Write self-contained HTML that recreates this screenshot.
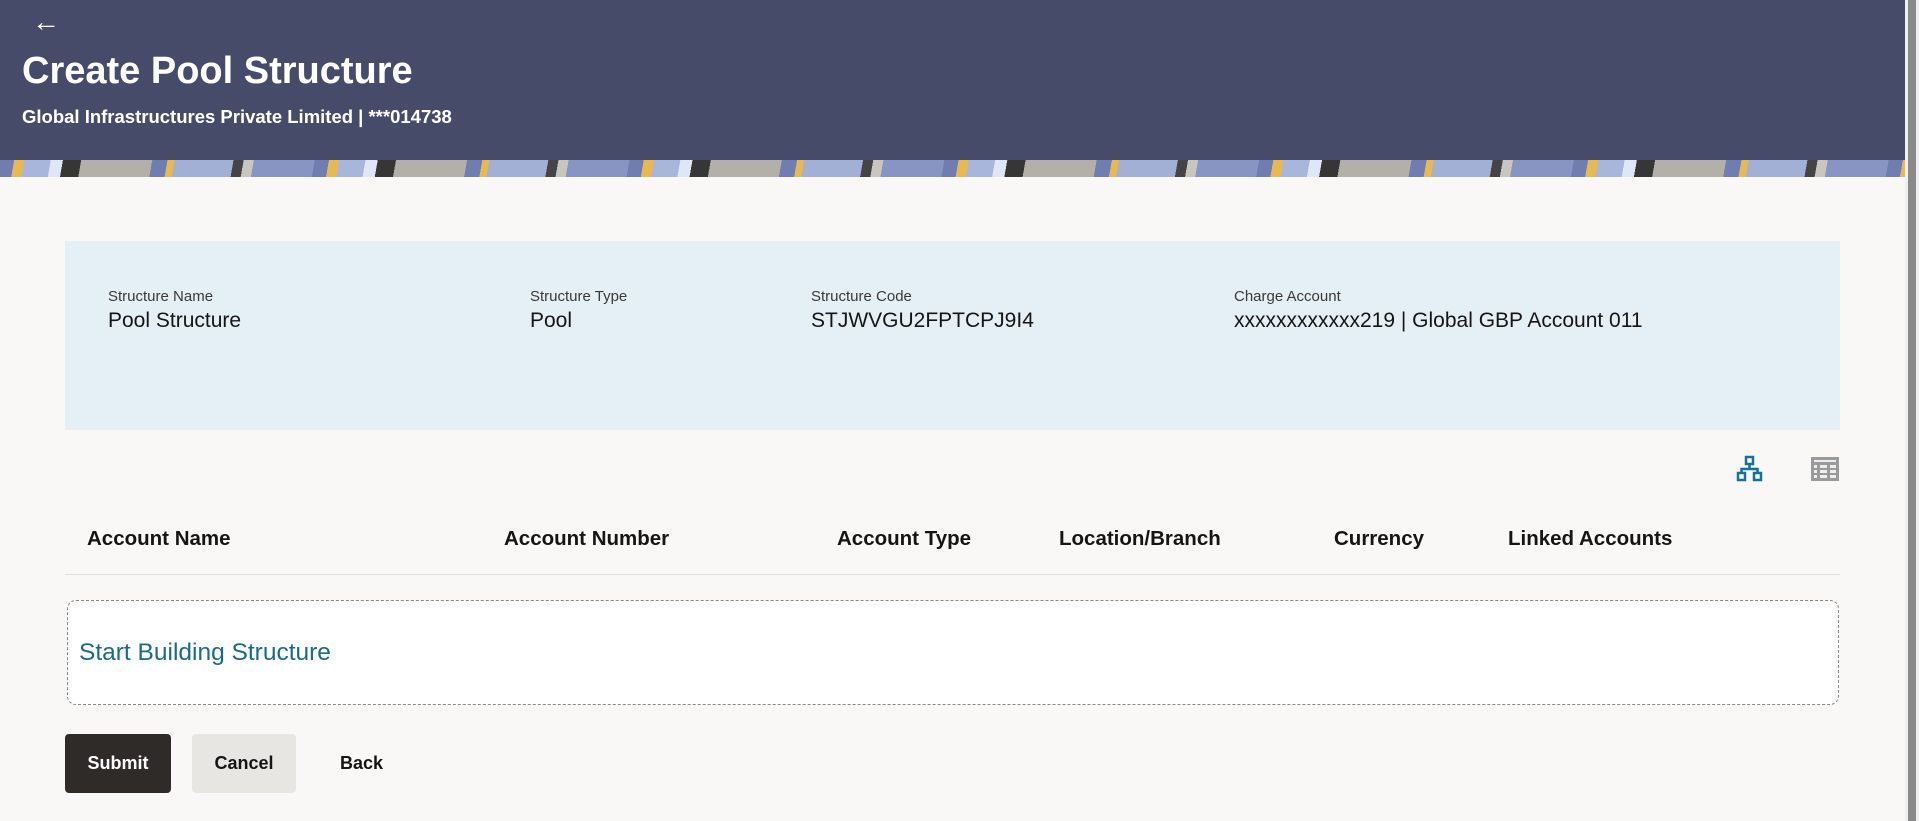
<!DOCTYPE html>
<html><head><style>
*{margin:0;padding:0;box-sizing:border-box}
body{width:1919px;height:821px;overflow:hidden;background:#f9f8f6;font-family:"Liberation Sans",sans-serif;position:relative;color:#161513}
.hdr{position:absolute;left:0;top:0;width:1905px;height:160px;background:#474b6a}
.band{position:absolute;left:0;top:160px;width:1905px;height:17px;
background:repeating-linear-gradient(100deg,#6f7db0 0 14px,#e8b952 14px 24px,#a9b6dc 24px 50px,#dfe6f5 50px 62px,#363634 62px 80px,#b3b0aa 80px 150px,#6f7db0 150px 165px,#e8b952 165px 172px,#a3b0d6 172px 230px,#444 230px 240px,#c8c6c0 240px 250px,#8795c4 250px 310px)}
.sb{position:absolute;left:1905px;top:0;width:14px;height:821px;background:#f0f0f0}
.sb i{position:absolute;left:3px;top:0;width:8px;height:821px;background:#8a8a8a}
.abs{position:absolute;white-space:nowrap}
.lbl{font-size:15px;color:#3b3936}
.val{font-size:21px}
.th{font-size:20.5px;font-weight:bold;top:527px}
</style></head><body>
<div class="hdr"></div><div class="band"></div>
<div class="sb"><i></i></div>
<div class="abs" style="left:32px;top:6px;color:#fff;font-size:28px">&#8592;</div>
<div class="abs" style="left:22px;top:50px;color:#fff;font-size:38px;font-weight:bold">Create Pool Structure</div>
<div class="abs" style="left:22px;top:106px;color:#fff;font-size:18.5px;font-weight:bold">Global Infrastructures Private Limited | ***014738</div>

<div class="abs" style="left:65px;top:241px;width:1775px;height:189px;background:#e4f0f6"></div>
<div class="abs lbl" style="left:108px;top:288px">Structure Name</div>
<div class="abs val" style="left:108px;top:309px">Pool Structure</div>
<div class="abs lbl" style="left:530px;top:288px">Structure Type</div>
<div class="abs val" style="left:530px;top:309px">Pool</div>
<div class="abs lbl" style="left:811px;top:288px">Structure Code</div>
<div class="abs val" style="left:811px;top:309px">STJWVGU2FPTCPJ9I4</div>
<div class="abs lbl" style="left:1234px;top:288px">Charge Account</div>
<div class="abs val" style="left:1234px;top:309px">xxxxxxxxxxxx219 | Global GBP Account 011</div>

<svg class="abs" style="left:1736px;top:455px" width="28" height="28" viewBox="0 0 28 28" fill="none" stroke="#16709e" stroke-width="2.5">
<rect x="10" y="2" width="7" height="7"/><rect x="2" y="18" width="7" height="7"/><rect x="18" y="18" width="7" height="7"/>
<path d="M13.5 9v5M5.5 18v-4h16v4"/></svg>
<svg class="abs" style="left:1811px;top:457px" width="28" height="24" viewBox="0 0 28 24">
<rect x="0" y="0" width="28" height="24" fill="#9a9a9a"/>
<rect x="3" y="3" width="22" height="2" fill="#eee"/>
<g fill="#eee"><rect x="3" y="8" width="3" height="3"/><rect x="9" y="8" width="7" height="3"/><rect x="19" y="8" width="6" height="3"/>
<rect x="3" y="13" width="3" height="3"/><rect x="9" y="13" width="7" height="3"/><rect x="19" y="13" width="6" height="3"/>
<rect x="3" y="18" width="3" height="3"/><rect x="9" y="18" width="7" height="3"/><rect x="19" y="18" width="6" height="3"/></g></svg>

<div class="abs th" style="left:87px">Account Name</div>
<div class="abs th" style="left:504px">Account Number</div>
<div class="abs th" style="left:837px">Account Type</div>
<div class="abs th" style="left:1059px">Location/Branch</div>
<div class="abs th" style="left:1334px">Currency</div>
<div class="abs th" style="left:1508px">Linked Accounts</div>
<div class="abs" style="left:65px;top:574px;width:1775px;height:1px;background:#e2e0dd"></div>

<div class="abs" style="left:67px;top:600px;width:1772px;height:105px;background:#fff;border:1.5px dashed #8a8784;border-radius:9px"></div>
<div class="abs" style="left:79px;top:639px;font-size:24.5px;color:#1a6a8c">Start Building Structure</div>

<div class="abs" style="left:65px;top:734px;width:106px;height:59px;background:#2f2b28;border-radius:4px;color:#fff;font-weight:bold;font-size:18px;line-height:59px;text-align:center">Submit</div>
<div class="abs" style="left:192px;top:734px;width:104px;height:59px;background:#e8e6e3;border-radius:4px;font-weight:bold;font-size:18px;line-height:59px;text-align:center">Cancel</div>
<div class="abs" style="left:340px;top:734px;height:59px;font-weight:bold;font-size:18px;line-height:59px">Back</div>
</body></html>
